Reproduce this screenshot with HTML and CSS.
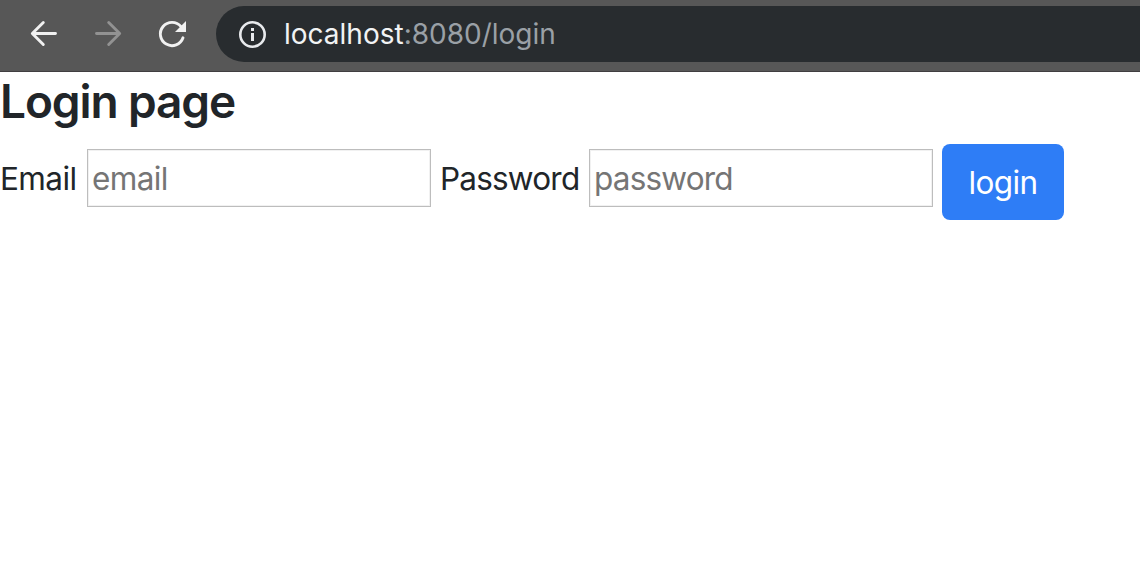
FILE: index.html
```html
<!DOCTYPE html>
<html lang="en">
<head>
<meta charset="utf-8">
<title>Login page</title>
<link rel="stylesheet" href="styles.css">
</head>
<body>
<header class="toolbar">
  <nav class="nav">
    <svg class="icon" viewBox="0 0 32 32"><path d="M27.500 15.500H4.500M15.300 4.500L4.300 15.500L15.300 26.500"/></svg>
    <svg class="icon icon-disabled" viewBox="0 0 32 32"><path d="M4.500 15.500H27.500M16.700 4.500L27.700 15.500L16.700 26.500"/></svg>
    <svg class="icon" viewBox="0 0 32 32"><path d="M27 19.800A11.640 11.640 0 1 1 25 8.600"/><path class="solid" d="M30 3V14H19z"/></svg>
  </nav>
  <div class="address">
    <svg class="info" viewBox="0 0 28 28"><circle cx="14.500" cy="14.500" r="12.200"/><path class="solid" d="M13 8h3v3h-3zM13 13h3v8h-3z"/></svg>
    <div class="url"><span class="host">localhost</span><span class="path">:8080/login</span></div>
  </div>
</header>
<main class="page">
  <h1 class="title">Login page</h1>
  <form class="form">
    <label class="label label-email" for="email">Email</label>
    <input class="input input-email" id="email" type="text" placeholder="email">
    <label class="label label-password" for="password">Password</label>
    <input class="input input-password" id="password" type="password" placeholder="password">
    <button class="button" type="button"><span>login</span></button>
  </form>
</main>
</body>
</html>
```
FILE: styles.css
```css
* { box-sizing: border-box; }
body {
  margin: 0;
  background: #fff;
  color: #212529;
  font-family: Inter, "Liberation Sans", sans-serif;
  overflow: hidden;
}
.toolbar {
  display: flex;
  height: 72px;
  padding: 6px 0 9px 28px;
  background: #575757;
  border-bottom: 1px solid #403e40;
}
.nav {
  display: flex;
  align-items: center;
  gap: 32px;
  width: 188px;
}
.icon {
  width: 32px;
  height: 32px;
  flex: none;
  fill: none;
  stroke: #f1f1f1;
  stroke-width: 2.900;
  stroke-linecap: round;
  stroke-linejoin: round;
}
.icon-disabled { stroke: #929292; }
.icon .solid { fill: #f1f1f1; stroke: none; }
.address {
  display: flex;
  flex: 1;
  align-items: center;
  height: 56px;
  padding-left: 22px;
  background: #282c2f;
  border-radius: 28px 0 0 28px;
}
.info {
  width: 28px;
  height: 28px;
  margin-right: 18px;
  overflow: visible;
  fill: none;
  stroke: #e8eaed;
  stroke-width: 2.600;
}
.info .solid { fill: #e8eaed; stroke: none; }
.url {
  font-size: 28px;
  line-height: 36px;
  letter-spacing: 0;
  color: #9aa0a6;
}
.host { color: #f1f3f4; }
.title {
  margin: 0;
  height: 72px;
  font-size: 46px;
  line-height: 58px;
  font-weight: 600;
  letter-spacing: -1.1px;
}
.form {
  display: flex;
  align-items: flex-start;
  height: 76px;
}
.label {
  margin-top: 11px;
  font-size: 31.500px;
  line-height: 48px;
  letter-spacing: -0.6px;
}
.label-email { width: 87px; }
.label-password { width: 149px; letter-spacing: -0.8px; }
.input {
  width: 344px;
  height: 58px;
  margin: 5px 0 0;
  padding: 0 3px 0 4px;
  border: 1px solid #bdbdbd;
  border-radius: 0;
  box-shadow: inset 0 0 0 1px #f1f1f1;
  outline: 0;
  background: #fff;
  color: #212529;
  font: 31.500px Inter, "Liberation Sans", sans-serif;
  letter-spacing: -0.6px;
}
.input::placeholder { color: #757575; opacity: 1; }
.input-email { margin-right: 9px; }
.input-password { letter-spacing: -0.8px; }
.button {
  width: 122px;
  height: 76px;
  margin: 0 0 0 9px;
  padding: 0;
  border: 0;
  border-radius: 8px;
  background: #2e7df6;
  color: #fff;
  font: 31.500px Inter, "Liberation Sans", sans-serif;
  letter-spacing: -0.6px;
}
```
